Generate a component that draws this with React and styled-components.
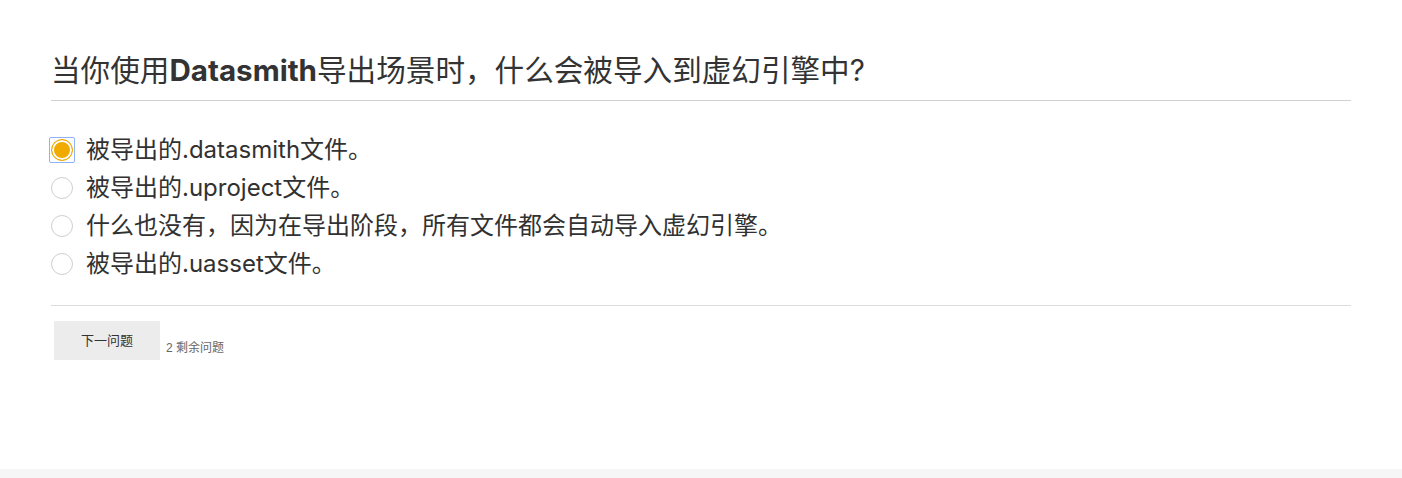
import styled, { createGlobalStyle } from "styled-components";

const GlobalStyle = createGlobalStyle`
  html, body {
    margin: 0;
    padding: 0;
    background: #fff;
  }
  body {
    font-family: Inter, "Noto Sans CJK SC", sans-serif;
    color: #313131;
  }
`;

const Page = styled.div`
  min-height: 478px;
  display: flex;
  flex-direction: column;
`;

const Quiz = styled.div`
  width: 1300px;
  margin: 0 auto;
  flex: 1;
`;

const Question = styled.h1`
  margin: 0;
  padding: 50px 0 10px;
  font-size: 29.6px;
  line-height: 40px;
  font-weight: 400;
  color: #333;
  border-bottom: 1px solid #d2d2d2;
  b {
    font-weight: 700;
  }
`;

const Options = styled.div`
  margin-top: 30px;
  padding-bottom: 22px;
  border-bottom: 1px solid #dcdcdc;
  display: flex;
  flex-direction: column;
`;

const Option = styled.label`
  display: flex;
  align-items: center;
  height: 38px;
  font-size: 24px;
  color: #313131;
  cursor: pointer;
`;

const OptionText = styled.span`
  margin-top: -5px;
`;

const Radio = styled.span`
  position: relative;
  width: 22px;
  height: 22px;
  box-sizing: border-box;
  border-radius: 50%;
  border: 1px solid ${(p) => (p.checked ? "#f0aa00" : "#cfcfcf")};
  background: ${(p) => (p.checked ? "#f0aa00" : "#fff")};
  box-shadow: ${(p) => (p.checked ? "inset 0 0 0 2px #fff" : "none")};
  margin-right: 13px;
  flex-shrink: 0;
  &::after {
    content: "";
    display: ${(p) => (p.checked ? "block" : "none")};
    position: absolute;
    left: -3px;
    top: -3px;
    right: -3px;
    bottom: -3px;
    border: 1px solid #8fb4f5;
    border-radius: 2px;
  }
`;

const Actions = styled.div`
  display: flex;
  align-items: flex-end;
  margin-top: 15px;
  padding-left: 3px;
`;

const NextButton = styled.button`
  width: 106px;
  height: 39px;
  border: none;
  background: #ececec;
  font-family: "Liberation Sans", "Noto Sans CJK SC", sans-serif;
  font-size: 13px;
  color: #333;
  padding: 0 0 3px;
  cursor: pointer;
`;

const Remaining = styled.span`
  margin-left: 6px;
  margin-bottom: 5px;
  font-family: "Liberation Sans", "Noto Sans CJK SC", sans-serif;
  font-size: 12px;
  color: #666;
`;

const Footer = styled.div`
  height: 9px;
  background: #f6f6f6;
`;

const answers = [
  "被导出的.datasmith文件。",
  "被导出的.uproject文件。",
  "什么也没有，因为在导出阶段，所有文件都会自动导入虚幻引擎。",
  "被导出的.uasset文件。",
];

export default function App() {
  const selected = 0;
  return (
    <Page>
      <GlobalStyle />
      <Quiz>
        <Question>
          当你使用<b>Datasmith</b>导出场景时，什么会被导入到虚幻引擎中?
        </Question>
        <Options>
          {answers.map((a, i) => (
            <Option key={i}>
              <Radio checked={i === selected} />
              <OptionText>{a}</OptionText>
            </Option>
          ))}
        </Options>
        <Actions>
          <NextButton>下一问题</NextButton>
          <Remaining>2 剩余问题</Remaining>
        </Actions>
      </Quiz>
      <Footer />
    </Page>
  );
}
